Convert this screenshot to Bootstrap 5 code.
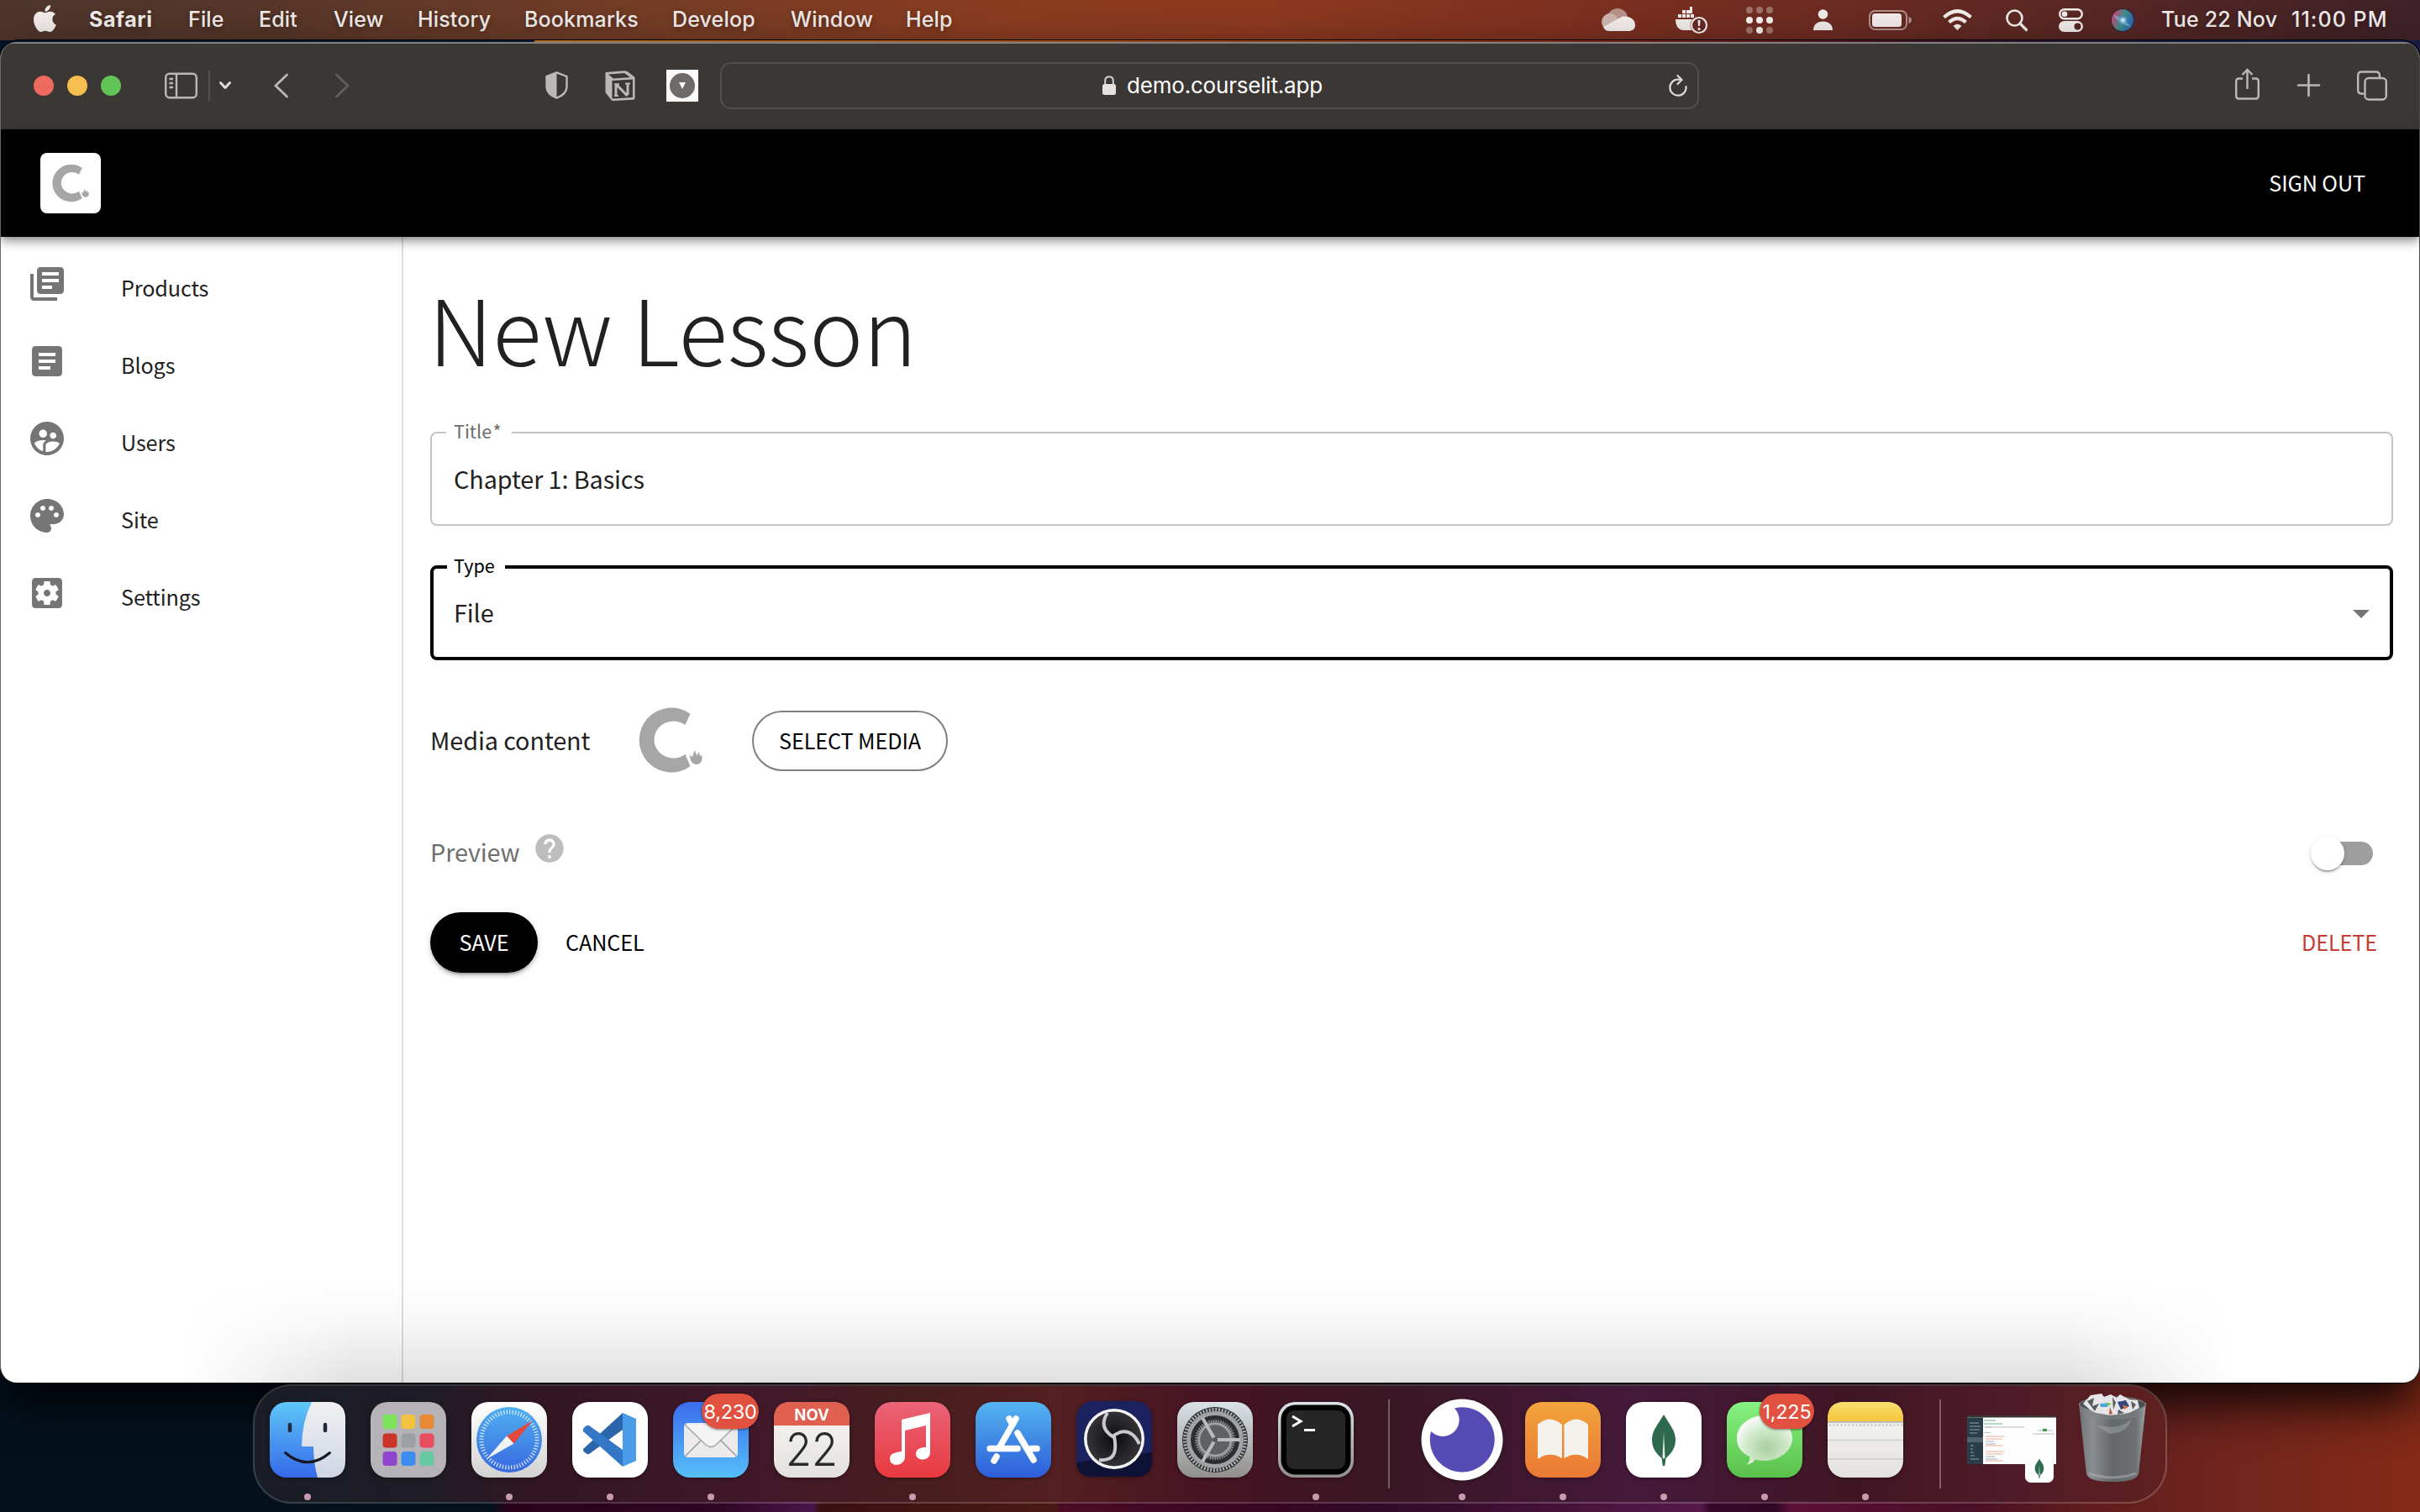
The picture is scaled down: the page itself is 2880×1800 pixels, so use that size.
<!DOCTYPE html>
<html lang="en">
<head>
<meta charset="utf-8">
<title>New Lesson</title>
<link href="https://cdn.jsdelivr.net/npm/bootstrap@5.3.0/dist/css/bootstrap.min.css" rel="stylesheet">
<style>
  html, body { height: 100%; }
  body {
    overflow: hidden; height: 1800px;
    background:
      linear-gradient(90deg,#03132a 0,#071a33 635px,#b0702a 637px,#a5521f 1200px,#7a2a1c 1900px,#3a1226 2300px,#101a3c 2600px,#1a1f45 2880px) 0 0/100% 80px no-repeat,
      linear-gradient(90deg,#04111d 0,#04111d 585px,#2a0218 605px,#2f0522 850px,#481648 968px,#3a1010 976px,#4a1a14 1255px,#4b0b24 1262px,#380620 1500px,#300a28 1640px,#561848 2025px,#36082c 2035px,#300823 2112px,#5a1036 2130px,#4a0f24 2350px,#5e1d1c 2480px,#6e241e 2620px,#852a17 2880px);
  }
  .sys { font-family: Inter, "Liberation Sans", sans-serif; }
  .src { font-family: "Noto Sans CJK SC", "Noto Sans", sans-serif; }
  svg { display: block; flex: none; overflow: visible; }

  .menubar { height: 48px; flex: none; color: #f1ecea; font-size: 25px; line-height: 48px; text-shadow: 0 2px 6px rgba(0,0,0,.35);
    background: linear-gradient(90deg,#4e352b 0,#553629 300px,#703c27 700px,#8b3c1f 1200px,#8c391e 1500px,#7e3020 1860px,#5e2823 2400px,#3e2228 2880px); padding: 0 37px 0 40px; }
  .menubar > div { display: grid; align-items: center; white-space: nowrap; }
  .menus { grid-template-columns: 66px 118px 84px 89px 100px 127px 176px 141px 137px 60px; letter-spacing: .15px; }
  .tray { grid-template-columns: 88px 84px 80px 66px 88px 75px 63px 62px 60px 155px 116px; }
  .menus span, .tray span { line-height: 44px; margin-top: -2px; font-weight: 500; }
  .menus span.fw-bold { letter-spacing: .6px; }

  .win { height: 1596px; margin-top: 2px; flex: none; border-radius: 20px; overflow: hidden; background: #fff; border-left: 1px solid #6b6866; border-right: 1px solid #4b4846; }
  .winwrap { border-radius: 22px; box-shadow: 0 0 0 1px #000, 0 26px 56px rgba(0,0,0,.85); flex: none; position: relative; }
  .toolbar { height: 104px; background: #3b3734; border-top: 2px solid #82807e; color: #bcb8b5; padding: 0 38px 3px 39px; flex: none; }
  .dotc { width: 24px; height: 24px; border-radius: 50%; }
  .tb-l { width: 817px; }
  .urlbox { width: 1165px; height: 56px; border: 2px solid #524e4b; border-radius: 13px; color: #fff; font-size: 26px; letter-spacing: -.2px; }

  .apphead { height: 128px; background: #000; flex: none; padding: 0 64px 0 47px; position: relative;
    box-shadow: 0 4px 8px -2px rgba(0,0,0,.3), 0 8px 10px rgba(0,0,0,.16), 0 2px 20px rgba(0,0,0,.14); }
  .logobox { width: 72px; height: 72px; border-radius: 8px; }
  .ui { font-size: 25.2px; line-height: 50px; letter-spacing: -.1px; color: #fff; margin-top: -2px; }

  .side { width: 479px; border-right: 2px solid #dedede; padding: 22px 0 0 31px; color: #212121; }
  .side .item { height: 92px; gap: 64px; padding-top: 10px; }
  .side .item span { font-size: 25.2px; line-height: 36px; padding-top: 10px; letter-spacing: -.12px; }
  .side svg { color: #757575; }

  .pane { padding: 47px 31px 0 32px; color: #212121; }
  .pane h1 { font-size: 108px; line-height: 120px; font-weight: 300; margin: 0 0 0 -2px; }
  .fieldbox { border: 2px solid #c4c4c4; border-radius: 8px; height: 112px; margin-top: 65px; font-size: 28.8px; letter-spacing: -.1px; padding: 0 26px 1px; position: relative; }
  .fieldbox label { position: absolute; top: -19px; left: 17px; font-size: 21.6px; line-height: 32px; background: #fff; padding: 0 12px 0 9px; color: #6c6c6c; letter-spacing: 0; }
  .fieldbox.focus { border: 4px solid #000; margin-top: 47px; height: 113px; padding: 0 24px 1px; }
  .fieldbox.focus label { color: #000; top: -20px; left: 16px; padding: 0 12px 0 8px; }
  .lbl { font-size: 28.8px; line-height: 44px; letter-spacing: -.1px; }
  .mediarow { height: 76px; margin-top: 57px; }
  .pillbtn { height: 72px; border-radius: 36px; font-size: 25.2px; letter-spacing: -.1px; display: flex; align-items: center; justify-content: center; }
  .pill-o { border: 2px solid #7f7f7f; width: 233px; color: #000; margin: 2px 0 0 59px; }
  .pill-s { background: #000; color: #fff; width: 128px; box-shadow: 0 6px 2px -4px rgba(0,0,0,.2), 0 4px 4px rgba(0,0,0,.14), 0 2px 10px rgba(0,0,0,.12); }
  .prevrow { height: 52px; margin-top: 71px; color: #6f6f6f; }
  .switchy { width: 68px; height: 28px; border-radius: 14px; background: #9e9e9e; margin-right: 24px; display: flex; align-items: center; }
  .switchy i { width: 40px; height: 40px; border-radius: 50%; background: #fff; margin-left: -6px; flex: none; box-shadow: 0 4px 2px -2px rgba(0,0,0,.2), 0 2px 2px rgba(0,0,0,.14), 0 2px 6px rgba(0,0,0,.12); }
  .actions { margin-top: 44px; }

  .dockbar { height: 142px; margin: 2px auto 0; flex: none; position: relative; z-index: 3; border: 2px solid rgba(255,255,255,.2); border-radius: 46px; padding: 19px 23px 0 18px; gap: 30px;
    background: linear-gradient(90deg,#1a1d26 0,#1e1c26 200px,#321622 340px,#41182a 600px,#481e1e 800px,#541f21 960px,#471423 1120px,#3a1724 1350px,#44193a 1640px,#401624 1900px,#501b28 2100px,#60211f 2280px) padding-box; }
  .dockshade { position: absolute; inset: auto 0 0 0; height: 120px; pointer-events: none;
    background: linear-gradient(180deg, rgba(0,0,0,0), rgba(0,0,0,.035) 45%, rgba(0,0,0,.12)); -webkit-mask-image: linear-gradient(90deg,transparent 220px,#000 420px,#000 2460px,transparent 2660px); mask-image: linear-gradient(90deg,transparent 220px,#000 420px,#000 2460px,transparent 2660px); }
  .app { width: 90px; position: relative; }
  .app.on::after { content: ""; display: block; width: 8px; height: 8px; border-radius: 50%; background: #c99bb0; margin: 19px auto 0; }
  .app svg { filter: drop-shadow(0 1px 2px rgba(0,0,0,.4)); }
  .cnt { position: absolute; top: -10px; height: 42px; border-radius: 21px; background: #e2503f; color: #fff; font-size: 23.5px; line-height: 43px; text-align: center; letter-spacing: -.3px; box-shadow: 0 1px 3px rgba(0,0,0,.5); }
  .sep { width: 2px; height: 106px; background: rgba(255,255,255,.3); margin: -3px 11px 0; }
</style>
</head>
<body class="m-0 d-flex flex-column sys">

<svg width="0" height="0" style="position:absolute">
  <defs>
    <symbol id="clogo" viewBox="0 0 76 76" overflow="visible"><path fill="#a6a6a6" d="M63 7.3A38.400 38.400 0 1 0 63 69.700L57 55.500A23 22 0 1 1 57 20.600Z" transform="translate(-1.500 -.5)"/><path fill="#a6a6a6" d="M61.500 55q1 4 2.800 2.400q.7-4.500 3-7.300q.3 4.300 2 6q2-1.200 2-4q1.500 2 1.700 4.800q1.300 0 1.700-1.500c2.600 6-.7 11.600-6 11.600c-4.800 0-8.500-5-7.200-12Z"/></symbol>
    <symbol id="leaf" viewBox="0 0 90 90"><path fill="#2f6a4e" d="M45 15C52 27 59 34 59 45C59 56 53 62 47.500 67L46.300 76H43.800L42.500 67C37 62 31 56 31 45C31 34 38 27 45 15Z"/><path fill="#e9f3ec" d="M45 36L46.500 66L45 68L43.500 66Z"/></symbol>
    <linearGradient id="gFinder" x2="0" y2="1"><stop stop-color="#5ec8f8"/><stop offset="1" stop-color="#3568ea"/></linearGradient>
    <linearGradient id="gFace" x2="0" y2="1"><stop stop-color="#f1f1f3"/><stop offset="1" stop-color="#ced6e4"/></linearGradient>
    <linearGradient id="gGrey" x2="0" y2="1"><stop stop-color="#fff"/><stop offset="1" stop-color="#d2d2d2"/></linearGradient>
    <linearGradient id="gSaf" x2="0" y2="1"><stop stop-color="#4fb0f0"/><stop offset="1" stop-color="#3868e0"/></linearGradient>
    <linearGradient id="gMail" x2="0" y2="1"><stop stop-color="#3a6ded"/><stop offset="1" stop-color="#55bff8"/></linearGradient>
    <linearGradient id="gMusic" x2="0" y2="1"><stop stop-color="#ea6478"/><stop offset="1" stop-color="#e8393f"/></linearGradient>
    <linearGradient id="gStore" x2="0" y2="1"><stop stop-color="#54b5f1"/><stop offset="1" stop-color="#2d5dd9"/></linearGradient>
    <linearGradient id="gSet" x2="0" y2="1"><stop stop-color="#d9e2e8"/><stop offset="1" stop-color="#918f8b"/></linearGradient>
    <linearGradient id="gBook" x2="0" y2="1"><stop stop-color="#f2a43c"/><stop offset="1" stop-color="#ea7834"/></linearGradient>
    <linearGradient id="gMsg" x2="0" y2="1"><stop stop-color="#86f281"/><stop offset="1" stop-color="#59c14a"/></linearGradient>
    <linearGradient id="gNote" x2="0" y2="1"><stop stop-color="#f9de70"/><stop offset="1" stop-color="#f6c63d"/></linearGradient>
    <linearGradient id="gPaper" x2="0" y2="1"><stop stop-color="#f8f8f6"/><stop offset="1" stop-color="#e3e1dc"/></linearGradient>
    <radialGradient id="gObs"><stop stop-color="#0c0b0d"/><stop offset="1" stop-color="#343236"/></radialGradient>
    <linearGradient id="gBin"><stop stop-color="#6f7376"/><stop offset=".2" stop-color="#8a8e91"/><stop offset=".5" stop-color="#63686b"/><stop offset=".85" stop-color="#6d7174"/><stop offset="1" stop-color="#a2a6a9"/></linearGradient>
    <radialGradient id="gBub" cx=".55" cy=".65" r=".6"><stop stop-color="#a8cfa0"/><stop offset=".6" stop-color="#cfe8c8"/><stop offset="1" stop-color="#f4faf2"/></radialGradient>
    <radialGradient id="gSiri"><stop stop-color="#fff"/><stop offset=".35" stop-color="#8ec5e8"/><stop offset="1" stop-color="#2a6fb8" stop-opacity="0"/></radialGradient>
    <linearGradient id="gSiri2" x1="0" y1=".3" x2="1" y2=".7"><stop stop-color="#d8407a"/><stop offset=".5" stop-color="#3c8f86"/><stop offset="1" stop-color="#2b5fc0"/></linearGradient>
  </defs>
</svg>

<header class="menubar d-flex justify-content-between">
  <div class="menus">
    <svg width="26" height="32" viewBox="4 32 365 448" fill="#f1ecea" style="margin-top:-5px"><path d="M318.700 268.700c-.2-36.700 16.400-64.400 50-84.800-18.800-26.900-47.200-41.700-84.700-44.600-35.500-2.800-74.300 20.700-88.500 20.700-15 0-49.400-19.700-76.400-19.700C63.300 141.200 4 184.800 4 273.500q0 39.300 14.400 81.200c12.800 36.700 59 126.700 107.200 125.200 25.200-.6 43-17.900 75.800-17.900 31.800 0 48.300 17.900 76.400 17.900 48.600-.7 90.400-82.500 102.600-119.300-65.200-30.700-61.700-90-61.700-91.900zm-56.600-164.200c27.300-32.400 24.800-61.900 24-72.500-24.100 1.400-52 16.400-67.900 34.900-17.500 19.800-27.800 44.300-25.600 71.900 26.100 2 49.900-11.400 69.500-34.200z"/></svg>
    <span class="fw-bold">Safari</span><span>File</span><span>Edit</span><span>View</span><span>History</span><span>Bookmarks</span><span>Develop</span><span>Window</span><span>Help</span>
  </div>
  <div class="tray">
    <svg width="40" height="28" viewBox="0 0 40 28"><circle cx="19" cy="12" r="12" fill="#b7928a"/><circle cx="10" cy="16" r="10" fill="#cfb5af"/><path d="M2 22L24 10C34 8 40 14 40 20C40 25 36 27 32 27H9Q4 27 2 22Z" fill="#f3eeec"/></svg>
    <svg width="40" height="32" viewBox="0 0 40 32" fill="#f1ecea"><path d="M0 15H22L24 12V28H10C3 28 0 22 0 15ZM3 9h4v4H3zM8 9h4v4H8zM13 9h4v4h-4zM8 4h4v4H8zM13 4h4v4h-4zM18 9h4v4h-4zM17 0h3v8h-3z"/><circle cx="28" cy="22" r="10.500" fill="#692822"/><circle cx="28" cy="22" r="9" fill="none" stroke="#f1ecea" stroke-width="2.200"/><path d="M26.500 16h3l-.5 7h-2zM26.600 25h2.800v3h-2.800z"/></svg>
    <svg width="32" height="32" viewBox="0 0 32 32" fill="#f6f1ef"><g opacity=".35"><circle cx="4" cy="4" r="4"/><circle cx="16" cy="4" r="4"/><circle cx="28" cy="4" r="4"/><circle cx="4" cy="28" r="4"/><circle cx="28" cy="28" r="4"/></g><circle cx="4" cy="16" r="4"/><circle cx="16" cy="16" r="4"/><circle cx="28" cy="16" r="4"/><circle cx="16" cy="28" r="4"/></svg>
    <svg width="23" height="26" viewBox="0 0 23 26" fill="#f1ecea"><circle cx="11.500" cy="6" r="5.800"/><path d="M0 25C0 18 5 14.500 11.500 14.500S23 18 23 25Z"/></svg>
    <svg width="51" height="24" viewBox="0 0 51 24"><rect x="1" y="1" width="44" height="22" rx="6.500" fill="none" stroke="#b08f8b" stroke-width="2"/><rect x="4" y="4" width="35" height="16" rx="3.500" fill="#f1ecea"/><path d="M47.500 8Q51 9.500 51 12T47.500 16Z" fill="#b08f8b"/></svg>
    <svg width="35" height="26" viewBox="0 0 35 26" fill="none" stroke="#f1ecea" stroke-width="4.200"><path d="M1.500 9.500Q17.500-5 33.500 9.500"/><path d="M7.500 15.500Q17.500 6.500 27.500 15.500"/><path d="M12.500 20Q17.500 15.500 22.500 20L17.500 25Z" fill="#f1ecea" stroke="none"/></svg>
    <svg width="26" height="26" viewBox="0 0 26 26" fill="none" stroke="#f1ecea"><circle cx="10.500" cy="10.500" r="9" stroke-width="2.600"/><path d="M17 17L24.500 24.500" stroke-width="3.200" stroke-linecap="round"/></svg>
    <svg width="29" height="28" viewBox="0 0 29 28"><rect x="1.200" y="1.200" width="26.600" height="11" rx="5.500" fill="none" stroke="#f1ecea" stroke-width="2.400"/><circle cx="7" cy="6.700" r="3.300" fill="#f1ecea"/><rect y="15" width="29" height="13" rx="6.500" fill="#f1ecea"/><circle cx="22.500" cy="21.500" r="4" fill="#552522"/></svg>
    <svg width="28" height="28" viewBox="0 0 28 28"><circle cx="14" cy="14" r="14" fill="#29293a"/><circle cx="14" cy="14" r="13" fill="url(#gSiri2)"/><path d="M3 8Q14 10 24 22Q12 20 3 8Z" fill="#7fd1c8" opacity=".6"/><circle cx="14.500" cy="14" r="7" fill="url(#gSiri)"/></svg>
    <span style="letter-spacing:.2px">Tue 22 Nov</span><span style="letter-spacing:1.050px">11:00 PM</span>
  </div>
</header>

<div class="winwrap">
<main class="win d-flex flex-column">
  <div class="toolbar d-flex align-items-center">
    <div class="tb-l d-flex align-items-center">
      <div class="d-flex gap-3"><i class="dotc" style="background:#ec6a5e"></i><i class="dotc" style="background:#f4bf4f"></i><i class="dotc" style="background:#61c454"></i></div>
      <svg width="39" height="32" viewBox="0 0 39 32" style="margin-left:52px" fill="none" stroke="#bcb8b5" stroke-width="2.400"><rect x="1.200" y="1.700" width="36.600" height="28.600" rx="4.500"/><path d="M14 2V30M5.500 8H10M5.500 13H10M5.500 18H10"/></svg>
      <svg width="2" height="36" style="margin-left:13px"><path d="M1 0V36" stroke="#55514e" stroke-width="2"/></svg>
      <svg width="14" height="10" viewBox="0 0 14 10" style="margin-left:11px" fill="none" stroke="#dedbd9" stroke-width="3" stroke-linecap="round" stroke-linejoin="round"><path d="M1.500 1.500L7 7.500L12.500 1.500"/></svg>
      <svg width="17" height="30" viewBox="0 0 17 30" style="margin-left:51px" fill="none" stroke="#bcb8b5" stroke-width="2.800" stroke-linecap="round"><path d="M15.500 2L2 15L15.500 28"/></svg>
      <svg width="17" height="30" viewBox="0 0 17 30" style="margin-left:56px" fill="none" stroke="#625e5b" stroke-width="2.800" stroke-linecap="round"><path d="M1.500 2L15 15L1.500 28"/></svg>
      <svg width="27" height="33" viewBox="0 0 27 33" style="margin-left:233px"><path d="M13.500 1.300L25.500 6V18Q25.500 27 13.500 31.700Q1.500 27 1.500 18V6Z" fill="none" stroke="#bcb8b5" stroke-width="2.400"/><path d="M13.500 1V32Q1.500 27 1.500 18V6Z" fill="#bcb8b5"/></svg>
      <svg width="38" height="38" viewBox="0 0 38 38" style="margin-left:43px"><path d="M2 3L24 1.300Q27 1.200 29 3L36.500 9V34Q36.500 35.500 34 35.700L11 37Q9 37 8 35.500L1.500 27V4Z" fill="#bcb8b5"/><path d="M5 5.500L24 4L31 9L11 10.400Z M9.500 13L34 11.500V33L9.500 34.500Z" fill="#3b3734"/><path d="M14 30.500V17.500M14 17L27.500 31M28 30V17" stroke="#bcb8b5" stroke-width="3" fill="none"/><path d="M12 17.200H18M25 16.500H31M12 31H17" stroke="#bcb8b5" stroke-width="1.800"/></svg>
      <svg width="38" height="38" viewBox="0 0 38 38" style="margin-left:36px"><path d="M0 0H38V38H0Z" fill="#fafafa"/><circle cx="19" cy="19" r="15" fill="#6d6a68"/><path d="M15 15H23L19 23Z" fill="#fff"/></svg>
    </div>
    <div class="urlbox d-flex align-items-center">
      <svg width="16" height="23" viewBox="0 0 16 23" style="margin-left:453px"><rect y="10" width="16" height="13" rx="2.500" fill="#e4e2e1"/><path d="M3.200 10V6.500Q3.200 1.200 8 1.200T12.800 6.500V10" fill="none" stroke="#d4d1cf" stroke-width="2"/></svg>
      <span class="flex-grow-1" style="padding-left:13px">demo.courselit.app</span>
      <svg width="22" height="26" viewBox="0 0 22 26" style="margin-right:12px" fill="none" stroke="#dedbd9" stroke-width="2.200" stroke-linecap="round"><path d="M20.500 14A9.600 9.600 0 1 1 11 5.500L15 6M10.500 1L15.500 6L10.500 11"/></svg>
    </div>
    <div class="ms-auto d-flex align-items-center">
      <svg width="29" height="38" viewBox="0 0 29 38" fill="none" stroke="#bcb8b5" stroke-width="2.400" style="margin-top:-3px"><path d="M9 12.500H4.500Q1.200 12.500 1.200 16V33Q1.200 36.500 4.500 36.500H24.500Q27.800 36.500 27.800 33V16Q27.800 12.500 24.500 12.500H20M14.500 25V2M8.500 8L14.500 2L20.500 8"/></svg>
      <svg width="27" height="27" viewBox="0 0 27 27" style="margin-left:45px" stroke="#bcb8b5" stroke-width="2.600" stroke-linecap="round"><path d="M13.500 1V26M1 13.500H26"/></svg>
      <svg width="36" height="36" viewBox="0 0 36 36" style="margin-left:44px" fill="none" stroke="#bcb8b5" stroke-width="2.400"><path d="M8 27.500H5.500Q1.200 27.500 1.200 23.500V6Q1.200 1.500 5.500 1.500H22.500Q27 1.500 27 6V8"/><rect x="9.500" y="9" width="25.300" height="25.500" rx="4.500"/></svg>
    </div>
  </div>

  <div class="apphead d-flex align-items-center justify-content-between src">
    <div class="logobox bg-white d-flex align-items-center ps-3"><svg width="44" height="44" style="margin-left:-2px"><use href="#clogo"/></svg></div>
    <span class="ui">SIGN OUT</span>
  </div>

  <div class="d-flex flex-grow-1 src">
    <nav class="side d-flex flex-column">
      <div class="item d-flex"><svg width="48" height="48" viewBox="0 0 24 24" fill="currentColor"><path d="M4 6H2v14c0 1.100.9 2 2 2h14v-2H4V6zm16-4H8c-1.100 0-2 .9-2 2v12c0 1.100.9 2 2 2h12c1.100 0 2-.9 2-2V4c0-1.100-.9-2-2-2zm-1 9H9V9h10v2zm-4 4H9v-2h6v2zm4-8H9V5h10v2z"/></svg><span>Products</span></div>
      <div class="item d-flex"><svg width="48" height="48" viewBox="0 0 24 24" fill="currentColor"><path d="M19 3H5c-1.100 0-2 .9-2 2v14c0 1.100.9 2 2 2h14c1.100 0 2-.9 2-2V5c0-1.100-.9-2-2-2zm-5 14H7v-2h7v2zm3-4H7v-2h10v2zm0-4H7V7h10v2z"/></svg><span>Blogs</span></div>
      <div class="item d-flex"><svg width="48" height="48" viewBox="0 0 24 24" fill="currentColor"><path d="M11.990 2c-5.520 0-10 4.480-10 10s4.480 10 10 10 10-4.480 10-10-4.480-10-10-10zm3.610 6.340c1.070 0 1.930.86 1.930 1.930 0 1.070-.86 1.930-1.930 1.930-1.070 0-1.930-.86-1.930-1.930-.01-1.070.86-1.930 1.930-1.930zm-6-1.580c1.300 0 2.360 1.060 2.360 2.360 0 1.300-1.060 2.360-2.360 2.360s-2.360-1.060-2.360-2.360c0-1.310 1.050-2.360 2.360-2.360zm0 9.130v3.750c-2.400-.75-4.300-2.600-5.140-4.960 1.050-1.120 3.670-1.690 5.140-1.690.53 0 1.200.08 1.900.22-1.640.87-1.900 2.020-1.900 2.680zM11.990 20c-.27 0-.53-.01-.79-.04v-4.070c0-1.420 2.940-2.130 4.400-2.130 1.070 0 2.920.39 3.840 1.150-1.170 2.970-4.060 5.090-7.450 5.090z"/></svg><span>Users</span></div>
      <div class="item d-flex"><svg width="48" height="48" viewBox="0 0 24 24" fill="currentColor"><path d="M12 2C6.490 2 2 6.490 2 12s4.490 10 10 10c1.380 0 2.500-1.120 2.500-2.500 0-.61-.23-1.200-.64-1.670-.08-.1-.13-.21-.13-.33 0-.28.22-.5.5-.5H16c3.310 0 6-2.690 6-6 0-4.960-4.490-9-10-9zm5.500 11c-.83 0-1.500-.67-1.500-1.500s.67-1.500 1.500-1.500 1.500.67 1.500 1.500-.67 1.500-1.500 1.500zm-3-4c-.83 0-1.500-.67-1.500-1.500S13.670 6 14.500 6s1.500.67 1.500 1.500S15.330 9 14.500 9zM5 11.500c0-.83.67-1.500 1.500-1.500s1.500.67 1.500 1.500S7.330 13 6.500 13 5 12.330 5 11.500zm6-4c0 .83-.67 1.500-1.500 1.500S8 8.330 8 7.500 8.670 6 9.500 6s1.500.67 1.500 1.500z"/></svg><span>Site</span></div>
      <div class="item d-flex"><svg width="48" height="48" viewBox="0 0 24 24" fill="currentColor"><path d="M12 10c-1.100 0-2 .9-2 2s.9 2 2 2 2-.9 2-2-.9-2-2-2zm7-7H5c-1.110 0-2 .9-2 2v14c0 1.100.89 2 2 2h14c1.110 0 2-.9 2-2V5c0-1.100-.89-2-2-2zm-1.750 9c0 .23-.02.46-.05.68l1.480 1.160c.13.11.17.3.08.45l-1.400 2.420c-.09.15-.27.21-.43.15l-1.740-.7c-.36.28-.76.51-1.180.69l-.26 1.850c-.03.17-.18.3-.35.3h-2.800c-.17 0-.32-.13-.35-.29l-.26-1.850c-.43-.18-.82-.41-1.180-.69l-1.740.7c-.16.06-.34 0-.43-.15l-1.400-2.420c-.09-.15-.05-.34.08-.45l1.480-1.160c-.03-.23-.05-.46-.05-.69 0-.23.02-.46.05-.68l-1.480-1.160c-.13-.11-.17-.3-.08-.45l1.400-2.420c.09-.15.27-.21.43-.15l1.740.7c.36-.28.76-.51 1.180-.69l.26-1.850c.03-.17.18-.3.35-.3h2.800c.17 0 .32.13.35.29l.26 1.850c.43.18.82.41 1.180.69l1.740-.7c.16-.06.34 0 .43.15l1.400 2.420c.09.15.05.34-.08.45l-1.480 1.160c.03.23.05.46.05.69z"/></svg><span>Settings</span></div>
    </nav>
    <section class="pane flex-grow-1">
      <h1>New Lesson</h1>
      <div class="fieldbox d-flex align-items-center"><label>Title&#8202;*</label><span>Chapter 1: Basics</span></div>
      <div class="fieldbox focus d-flex align-items-center justify-content-between"><label>Type</label><span>File</span><svg width="20" height="10" style="margin-top:3px"><path d="M0 0H20L10 10Z" fill="#757575"/></svg></div>
      <div class="mediarow d-flex align-items-center"><span class="lbl" style="width:248px">Media content</span><svg width="76" height="76"><use href="#clogo"/></svg><div class="pillbtn pill-o">SELECT MEDIA</div></div>
      <div class="prevrow d-flex align-items-center justify-content-between">
        <div class="d-flex align-items-center"><span class="lbl" style="width:122px;margin-top:-4px">Preview</span><svg width="40" height="40" viewBox="0 0 24 24" fill="#bdbdbd" style="margin-top:-13px"><path d="M12 2C6.480 2 2 6.480 2 12s4.480 10 10 10 10-4.480 10-10S17.520 2 12 2zm1 17h-2v-2h2v2zm2.070-7.750l-.9.920C13.450 12.900 13 13.500 13 15h-2v-.5c0-1.100.45-2.100 1.170-2.830l1.240-1.260c.37-.36.59-.86.59-1.410 0-1.100-.9-2-2-2s-2 .9-2 2H8c0-2.210 1.790-4 4-4s4 1.790 4 4c0 .88-.36 1.680-.93 2.250z"/></svg></div>
        <div class="switchy"><i></i></div>
      </div>
      <div class="actions d-flex align-items-center"><div class="pillbtn pill-s">SAVE</div><div class="pillbtn" style="margin-left:33px;color:#000">CANCEL</div><div class="pillbtn ms-auto" style="margin-right:19px;color:#c63c34">DELETE</div></div>
    </section>
  </div>
</main>
<div class="dockshade"></div>
</div>

<footer class="dockbar d-flex">
  <div class="app on"><svg width="90" height="90"><rect width="90" height="90" rx="20" fill="url(#gFinder)"/><path d="M50 0H70Q90 0 90 20V70Q90 90 70 90H57Q52 72 52 53H38Q38 25 50 0Z" fill="url(#gFace)"/><path d="M24 27v7M66 27v7" stroke="#222a38" stroke-width="4.500" stroke-linecap="round"/><path d="M18.500 60.500Q45 83 71.500 60.500" fill="none" stroke="#15181f" stroke-width="3" stroke-linecap="round"/></svg></div>
  <div class="app"><svg width="90" height="90"><rect width="90" height="90" rx="20" fill="#b5b3b8"/><g><rect x="14.500" y="15" width="17" height="17" rx="4" fill="#7ce35b"/><rect x="36.500" y="15" width="17" height="17" rx="4" fill="#f3c340"/><rect x="58.500" y="15" width="17" height="17" rx="4" fill="#e68a35"/><rect x="14.500" y="37.500" width="17" height="17" rx="4" fill="#c93528"/><rect x="36.500" y="37.500" width="17" height="17" rx="4" fill="#9aa0a3"/><rect x="58.500" y="37.500" width="17" height="17" rx="4" fill="#e94d60"/><rect x="14.500" y="59" width="17" height="17" rx="4" fill="#8f46cc"/><rect x="36.500" y="59" width="17" height="17" rx="4" fill="#3b8df2"/><rect x="58.500" y="59" width="17" height="17" rx="4" fill="#67c9a4"/></g></svg></div>
  <div class="app on"><svg width="90" height="90"><rect width="90" height="90" rx="20" fill="url(#gGrey)"/><circle cx="45" cy="45" r="39" fill="url(#gSaf)"/><circle cx="45" cy="45" r="33" fill="none" stroke="#d8eafb" stroke-width="5" stroke-dasharray="1.200 2.256"/><path d="M73 22L50.500 49.500L42 40.500Z" fill="#e4483a"/><path d="M18 68L42 40.500L50.500 49.500Z" fill="#f2f2f2"/></svg></div>
  <div class="app on"><svg width="90" height="90"><rect width="90" height="90" rx="20" fill="#fff"/><path d="M60 13L76 20V70L60 77Z" fill="#4a9be8"/><path d="M60 13V33L20 62Q17 63 13 58V56Z" fill="#2a66ab"/><path d="M60 77V57L20 28Q17 27 13 32V35Z" fill="#3377c6"/></svg></div>
  <div class="app on"><svg width="90" height="90"><rect width="90" height="90" rx="20" fill="url(#gMail)"/><rect x="13" y="25" width="64" height="41" rx="5" fill="#eceaea"/><path d="M15 64L37 42M75 64L53 42" stroke="#9c9c9c" stroke-width="1.500"/><path d="M14 27L39 51Q45 56 51 51L76 27" fill="#f5f4f4" stroke="#a7a7a7" stroke-width="1.500"/></svg><span class="cnt" style="left:34px;width:68px">8,230</span></div>
  <div class="app"><svg width="90" height="90"><rect width="90" height="90" rx="20" fill="url(#gPaper)"/><path d="M0 28V20Q0 0 20 0H70Q90 0 90 20V28Z" fill="#e0604f"/><text x="45" y="22" font-size="18.500" font-weight="700" fill="#fff" text-anchor="middle">NOV</text><text x="45" y="76" font-size="55" font-weight="300" fill="#2a2a2a" text-anchor="middle" textLength="62" lengthAdjust="spacingAndGlyphs">22</text></svg></div>
  <div class="app on"><svg width="90" height="90"><rect width="90" height="90" rx="20" fill="url(#gMusic)"/><path d="M32 21L66 13V60C66 71 49 71 49 62C49 55 56 54 61 54V28L36 34V65C36 77 18 78 18 68C18 60 26 60 32 59Z" fill="#fff"/></svg></div>
  <div class="app"><svg width="90" height="90"><rect width="90" height="90" rx="20" fill="url(#gStore)"/><g stroke="#fff" stroke-width="7.500" stroke-linecap="round"><path d="M17 55.500H50M66 55.500H73M48 20L29 53M40 20L44 27M50 37L69 69M25 65L22 70"/></g></svg></div>
  <div class="app"><svg width="90" height="90"><rect y="-1" width="90" height="90" rx="20" fill="#1c2260"/><path d="M0 72L90 60V69Q90 89 70 89H20Q0 89 0 70Z" fill="#0e1234"/><circle cx="45" cy="44" r="36" fill="#f4f4f4"/><circle cx="45" cy="44" r="32.500" fill="url(#gObs)"/><path d="M37 13Q26 30 43 41Q47 38 52 36Q66 32 75 50M45 41Q49 62 40 67Q34 70 27 69" fill="none" stroke="#c9c8ca" stroke-width="4"/></svg></div>
  <div class="app"><svg width="90" height="90"><rect width="90" height="90" rx="20" fill="url(#gSet)"/><circle cx="45" cy="45" r="39" fill="#2b2f31"/><circle cx="45" cy="45" r="36" fill="none" stroke="#aeb1b2" stroke-width="4" stroke-dasharray="2 1.770"/><circle cx="45" cy="45" r="31.500" fill="none" stroke="#9fa3a4" stroke-width="5"/><circle cx="45" cy="45" r="22" fill="#5f6263" stroke="#8b8f90" stroke-width="4" stroke-dasharray="1.500 1.300"/><circle cx="45" cy="45" r="19" fill="none" stroke="#9fa3a4" stroke-width="2.500"/><path d="M45 45H75M45 45L30 19M45 45L30 71" stroke="#b9bcbd" stroke-width="4"/><circle cx="45" cy="45" r="3" fill="#55585a"/></svg></div>
  <div class="app on"><svg width="90" height="90"><rect width="90" height="90" rx="20" fill="url(#gSet)"/><rect x="3.500" y="3.500" width="83" height="83" rx="17" fill="#000"/><rect x="10" y="10" width="70" height="70" rx="9" fill="#262626"/><path d="M17 17L27 23L17 29M31 33.500H44" fill="none" stroke="#fff" stroke-width="3"/></svg></div>
  <div class="sep"></div>
  <div class="app on"><svg width="90" height="90"><circle cx="45" cy="45" r="48.500" fill="#fff"/><path d="M36 7.500A38.500 38.500 0 1 1 8 35A19.500 19.500 0 1 0 36 7.500Z" fill="#564bb5"/></svg></div>
  <div class="app on"><svg width="90" height="90"><rect width="90" height="90" rx="20" fill="url(#gBook)"/><path d="M15 27Q29 14 44 27V67Q29 58 15 68ZM46.500 27Q61 14 75 27V68Q61 58 46.500 67Z" fill="#f5f1ec"/></svg></div>
  <div class="app on"><svg width="90" height="90"><rect width="90" height="90" rx="20" fill="#fff"/><use href="#leaf" width="90" height="90"/></svg></div>
  <div class="app on"><svg width="90" height="90"><rect width="90" height="90" rx="20" fill="url(#gMsg)"/><path d="M45 16C63 16 78 28 78 43S63 70 45 70Q39 70 34 68.500Q31 73 24 75Q28 70 27 65Q12 58 12 43C12 28 27 16 45 16Z" fill="url(#gBub)"/></svg><span class="cnt" style="left:39px;width:65px">1,225</span></div>
  <div class="app on"><svg width="90" height="90"><rect width="90" height="90" rx="20" fill="url(#gPaper)"/><path d="M0 23V20Q0 0 20 0H70Q90 0 90 20V23Z" fill="url(#gNote)"/><path d="M0 24H90" stroke="#a9a9a9" stroke-width="1.500"/><path d="M2 27.500H90" stroke="#bbb" stroke-width="2" stroke-dasharray="2 2.500"/><path d="M0 45.500H90M0 68H90" stroke="#d4d3d2" stroke-width="2"/></svg></div>
  <div class="sep" style="margin-left:13px;margin-right:1px"></div>
  <div style="width:106px"><svg width="106" height="96"><path d="M0 16H106V74H0Z" fill="#fdfdfd"/><path d="M0 16H106V18.500H0Z" fill="#3a3533"/><path d="M0 18.500H19V74H0Z" fill="#2b3d49"/><path d="M0 42H19V48H0Z" fill="#50636d"/><path d="M3 25H14M3 29H16M3 33H15M3 37H12M4 52H8M4 56H7M4 60H8M4 64H9M4 68H14" stroke="#8fa0a9" stroke-width="1"/><path d="M20 22H34M20 26H42M21 30H30" stroke="#74b48c" stroke-width="1.200"/><path d="M30 30H68M21 36.500H28M84 34H102M78 38H104" stroke="#bbb" stroke-width="1"/><path d="M90 32H95V35H90Z" fill="#3f9a56"/><path d="M22 41H44M22 44H42M22 52H43M22 59H44M22 62H42M22 70H43" stroke="#edab98" stroke-width="1.200"/><path d="M22 47H32M22 50H34M22 65H33M22 68H36" stroke="#9db1c6" stroke-width="1"/><rect x="69" y="62" width="34" height="34" rx="7" fill="#fff"/><use href="#leaf" x="69" y="62" width="34" height="34"/></svg></div>
  <div style="width:80px;margin-left:-3px"><svg width="80" height="96" viewBox="0 9 80 96"><path d="M0 10Q40 24 80 10L71 95Q68 104 40 104T9 95Z" fill="url(#gBin)"/><ellipse cx="40" cy="12" rx="39.500" ry="9" fill="#4c5053" stroke="#85898b" stroke-width="1"/><path d="M5 11L14 1L27-1L30 3L38 0L45 4L49 0L60 6L70 7L72 16L60 22L49 24L36 25L20 22L13 18Z" fill="#e6e6e8"/><path d="M10 8L18 4L16 14L24 11L19 20ZM40 3L44 10L41 18ZM62 8L68 12L64 18ZM47 18L54 22L46 24Z" fill="#5b5c60"/><path d="M25 11L36 10L34 15H26Z" fill="#4aa9dc"/><path d="M32 10L39 11L35 14Z" fill="#79c54c"/><path d="M46 9L56 7L60 14L50 18Z" fill="#34477f"/><path d="M52 12L59 15L54 18Z" fill="#cf7440"/><path d="M37 15L40 23L36 24Z" fill="#b8533d"/><path d="M4 13Q6 22 40 24.500Q74 22 77 13L76 26Q40 34 6 26Z" fill="#7f8486" opacity=".45"/><path d="M20 36Q45 44 62 30Q58 46 36 47Z" fill="#b0b4b6" opacity=".4"/><path d="M12 94Q40 104 68 94" fill="none" stroke="#b4b8ba" stroke-width="3" opacity=".5"/></svg></div>
</footer>
<script src="https://cdn.jsdelivr.net/npm/bootstrap@5.3.0/dist/js/bootstrap.bundle.min.js"></script>
</body>
</html>
